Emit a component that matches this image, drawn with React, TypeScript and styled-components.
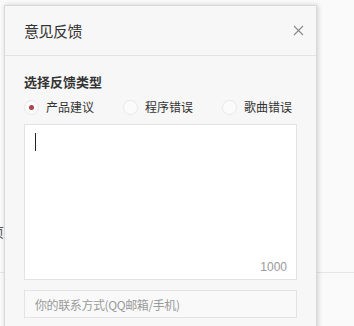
import React from "react";
import styled, { createGlobalStyle } from "styled-components";

const Global = createGlobalStyle`
  html, body { margin: 0; padding: 0; background: #fafafa; }
  body { font-family: "Noto Sans CJK SC", "Noto Sans", sans-serif; }
`;

const Page = styled.div`
  position: relative;
  width: 354px;
  height: 326px;
  overflow: hidden;
  background: #fafafa;
`;

const Backdrop = styled.div`
  padding-top: 224px;
`;

const BackRow = styled.div`
  height: 48px;
  border-bottom: 1px solid #e6e6e6;
  font-size: 13px;
  line-height: 16px;
  color: #555;
`;

const BackText = styled.span`
  display: inline-block;
  margin-left: -9px;
`;

const Dialog = styled.div`
  position: absolute;
  left: 4px;
  top: 5px;
  width: 311px;
  height: 340px;
  background: #f7f7f7;
  border: 1px solid #d9d9d9;
  box-shadow: 1px 0 5px rgba(0, 0, 0, 0.18);
  display: flex;
  flex-direction: column;
`;

const Header = styled.div`
  height: 49px;
  border-bottom: 1px solid #e3e3e3;
  display: flex;
  align-items: center;
  justify-content: space-between;
  padding: 0 12px 0 19px;
`;

const Title = styled.div`
  font-size: 15px;
  color: #333;
  letter-spacing: -0.5px;
`;

const Close = styled.button`
  border: 0;
  background: none;
  padding: 0;
  width: 12px;
  height: 12px;
  display: flex;
  align-items: center;
  justify-content: center;
  cursor: pointer;
`;

const Body = styled.div`
  padding: 17px 19px 0 19px;
  display: flex;
  flex-direction: column;
`;

const Label = styled.div`
  font-size: 13px;
  font-weight: bold;
  color: #333;
  line-height: 18px;
`;

const RadioRow = styled.div`
  display: flex;
  align-items: center;
  margin-top: 8px;
  height: 16px;
  gap: 29px;
`;

const RadioItem = styled.label`
  display: flex;
  align-items: center;
  gap: 7px;
  font-size: 12px;
  color: #333;
  line-height: 16px;
`;

const Circle = styled.span<{ $on?: boolean }>`
  width: 13px;
  height: 13px;
  border-radius: 50%;
  border: 1px solid #e8e8e8;
  background: #fbfbfb;
  display: flex;
  align-items: center;
  justify-content: center;
  &::after {
    content: "";
    width: 5px;
    height: 5px;
    border-radius: 50%;
    background: ${(p) => (p.$on ? "#a94448" : "transparent")};
  }
`;

const TextBox = styled.div`
  position: relative;
  margin-top: 9px;
  height: 154px;
  background: #fff;
  border: 1px solid #e3e3e3;
`;

const Caret = styled.span`
  position: absolute;
  left: 10px;
  top: 8px;
  width: 1px;
  height: 18px;
  background: #222;
`;

const Count = styled.span`
  position: absolute;
  right: 9px;
  bottom: 5px;
  font-family: "Liberation Sans", Arial, sans-serif;
  font-size: 12px;
  line-height: 14px;
  color: #999;
`;

const Contact = styled.div`
  margin-top: 10px;
  height: 26px;
  border: 1px solid #e3e3e3;
  background: #f9f9f9;
  display: flex;
  align-items: center;
  padding-left: 10px;
  font-size: 12px;
  color: #999;
  letter-spacing: -0.4px;
`;

export default function App() {
  return (
    <Page>
      <Global />
      <Backdrop>
        <BackRow>
          <BackText>页</BackText>
        </BackRow>
      </Backdrop>
      <Dialog>
        <Header>
          <Title>意见反馈</Title>
          <Close aria-label="close">
            <svg width="11" height="11" viewBox="0 0 11 11">
              <path d="M1 1L10 10M10 1L1 10" stroke="#888" strokeWidth="1.1" />
            </svg>
          </Close>
        </Header>
        <Body>
          <Label>选择反馈类型</Label>
          <RadioRow>
            <RadioItem>
              <Circle $on />
              产品建议
            </RadioItem>
            <RadioItem>
              <Circle />
              程序错误
            </RadioItem>
            <RadioItem>
              <Circle />
              歌曲错误
            </RadioItem>
          </RadioRow>
          <TextBox>
            <Caret />
            <Count>1000</Count>
          </TextBox>
          <Contact>你的联系方式(QQ邮箱/手机)</Contact>
        </Body>
      </Dialog>
    </Page>
  );
}
